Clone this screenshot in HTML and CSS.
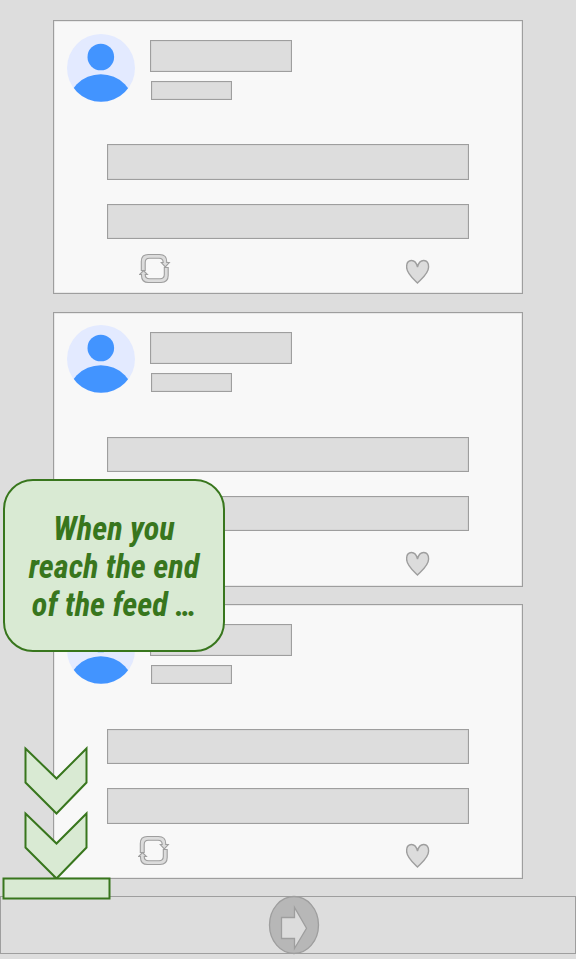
FILE: index.html
```html
<!DOCTYPE html>
<html lang="en">
<head>
<meta charset="utf-8">
<title>Feed</title>
<link rel="stylesheet" href="styles.css">
</head>
<body>
<svg class="defs" width="0" height="0" aria-hidden="true">
  <defs>
    <clipPath id="disc"><circle cx="34" cy="34" r="33.8"/></clipPath>
    <symbol id="avatar" viewBox="0 0 68 68">
      <circle cx="34" cy="34" r="34" fill="#e3eaff"/>
      <g clip-path="url(#disc)" fill="#4294ff">
        <circle cx="33.8" cy="23" r="13.3"/>
        <circle cx="33.8" cy="74.2" r="34"/>
      </g>
    </symbol>
    <symbol id="repeat" viewBox="0 0 32 32">
      <g fill="#dcdcdc" stroke="#9e9e9e" stroke-width="1.1">
        <path d="M2.300 17.500V8.500Q2.300 1.500 9.300 1.500H20.500Q27.700 1.500 27.700 8.500V9.500H30.300L26.300 13.900L22.300 9.500H24.200Q24.200 5.300 20 5.300H10.300Q6.200 5.300 6.200 9.500V17.500Z"/>
        <path d="M29.200 14.500V22.500Q29.200 29.500 22 29.500H9.500Q2.500 29.500 2.500 22.500V21.500H0.600L4.500 17.500L8.400 21.500H6.200Q6.200 25.700 10.500 25.700H21Q25.300 25.700 25.300 21.500V14.500Z"/>
      </g>
    </symbol>
    <symbol id="heart" viewBox="0 0 24 26">
      <path d="M11.500 8C13.500 -1 22.600 -.5 22.600 8C22.600 14.500 16 19.500 11.500 24C7 19.500 .6 14.500 .6 8C.6 -.5 9.500 -1 11.500 8Z" fill="#dcdcdc" stroke="#9e9e9e" stroke-width="1.400"/>
    </symbol>
  </defs>
</svg>

<main class="feed">
  <article class="card first">
    <header class="author">
      <svg class="avatar"><use href="#avatar"/></svg>
      <div class="meta"><div class="bar name"></div><div class="bar handle"></div></div>
    </header>
    <div class="lines"><div class="bar"></div><div class="bar"></div></div>
    <footer class="actions"><svg class="repeat"><use href="#repeat"/></svg><svg class="heart"><use href="#heart"/></svg></footer>
  </article>
  <article class="card second">
    <header class="author">
      <svg class="avatar"><use href="#avatar"/></svg>
      <div class="meta"><div class="bar name"></div><div class="bar handle"></div></div>
    </header>
    <div class="lines"><div class="bar"></div><div class="bar"></div></div>
    <footer class="actions"><svg class="repeat"><use href="#repeat"/></svg><svg class="heart"><use href="#heart"/></svg></footer>
  </article>
  <article class="card third">
    <header class="author">
      <svg class="avatar"><use href="#avatar"/></svg>
      <div class="meta"><div class="bar name"></div><div class="bar handle"></div></div>
    </header>
    <div class="lines"><div class="bar"></div><div class="bar"></div></div>
    <footer class="actions"><svg class="repeat"><use href="#repeat"/></svg><svg class="heart"><use href="#heart"/></svg></footer>
  </article>
</main>

<nav class="bottom-nav">
  <svg class="next" viewBox="0 0 52 60">
    <ellipse cx="26" cy="30" rx="24.500" ry="28.500" fill="#b7b7b7" stroke="#9e9e9e" stroke-width="1.300"/>
    <path d="M13.500 22.500H26.500V12.500L38.500 33.300L26.500 53.500V43.500H13.500Z" fill="#dcdcdc" stroke="#9e9e9e" stroke-width="1.300"/>
  </svg>
</nav>

<aside class="callout"><p>When you<br>reach the end<br>of the feed …</p></aside>
<svg class="scroll-hint" viewBox="0 0 112 156">
  <g fill="#d9ead3" stroke="#38761d" stroke-width="2">
    <path d="M25.500 4.500L56.500 34.500L86.500 4.500V38.500L56.500 69.500L25.500 38.500Z"/>
    <path d="M25.500 69.500L56.500 99.500L86.500 69.500V103.500L56.500 134.500L25.500 103.500Z"/>
    <rect x="3.500" y="134.500" width="106" height="20"/>
  </g>
</svg>
</body>
</html>
```
FILE: styles.css
```css
* { box-sizing: border-box; }

body {
  position: relative;
  margin: 0;
  height: 959px;
  overflow: hidden;
  background: #dddddd;
}

svg { display: block; flex: none; }
.defs { position: absolute; }

.feed {
  display: flex;
  flex-direction: column;
  gap: 17px;
  padding: 20px 53px 17px;
}

.card {
  --avatar-top: 14px;
  --line-one: 35px;
  --line-two: 35px;
  display: flex;
  flex-direction: column;
  height: 275px;
  border: 1px solid #9e9e9e;
  background: #f8f8f8;
  box-shadow: inset 0 0 0 .5px #d8d8d8;
}

.first { --line-one: 36px; height: 274px; margin-bottom: 1px; }
.second { --avatar-top: 12.700px; }
.third { --avatar-top: 11.600px; --line-two: 36px; }

.bar {
  border: 1px solid #9e9e9e;
  background: #dddddd;
  box-shadow: inset 0 0 0 .5px #cfcfcf;
}

.author {
  display: flex;
  align-items: flex-start;
  gap: 15px;
  height: 124px;
  padding-left: 13px;
}
.first .author { height: 123px; }

.avatar {
  width: 68px;
  height: 68px;
  margin-top: calc(var(--avatar-top) - 1px);
}

.meta { padding-top: 19px; }
.name { width: 142px; height: 32px; }
.handle { width: 81px; height: 19px; margin: 9px 0 0 1px; }

.lines {
  display: grid;
  grid-template-rows: var(--line-one) var(--line-two);
  gap: 24px;
  padding: 0 53px;
}

.actions {
  display: flex;
  justify-content: space-between;
  align-items: flex-start;
  padding: 14px 92px 0 85px;
}
.third .actions { padding-top: 11px; padding-left: 84px; }
.repeat { width: 32px; height: 32px; }
.heart { width: 24px; height: 26px; margin-top: 6px; }
.third .heart { margin-top: 8px; }

.bottom-nav {
  display: flex;
  justify-content: center;
  align-items: center;
  height: 58px;
  padding-left: 12px;
  border: 1px solid #9e9e9e;
}
.next { width: 52px; height: 60px; }

.callout {
  position: absolute;
  left: 3px;
  top: 479px;
  width: 222px;
  height: 173px;
  padding-top: 3px;
  display: flex;
  align-items: center;
  justify-content: center;
  border: 2px solid #38761d;
  border-radius: 30px;
  background: #d9ead3;
}

.callout p {
  margin: 0;
  color: #38761d;
  font: italic 700 32.300px/38px Roboto, sans-serif;
  font-stretch: 75%;
  text-align: center;
  white-space: nowrap;
}

.scroll-hint {
  position: absolute;
  left: 0;
  top: 744px;
  width: 112px;
  height: 156px;
}
```
